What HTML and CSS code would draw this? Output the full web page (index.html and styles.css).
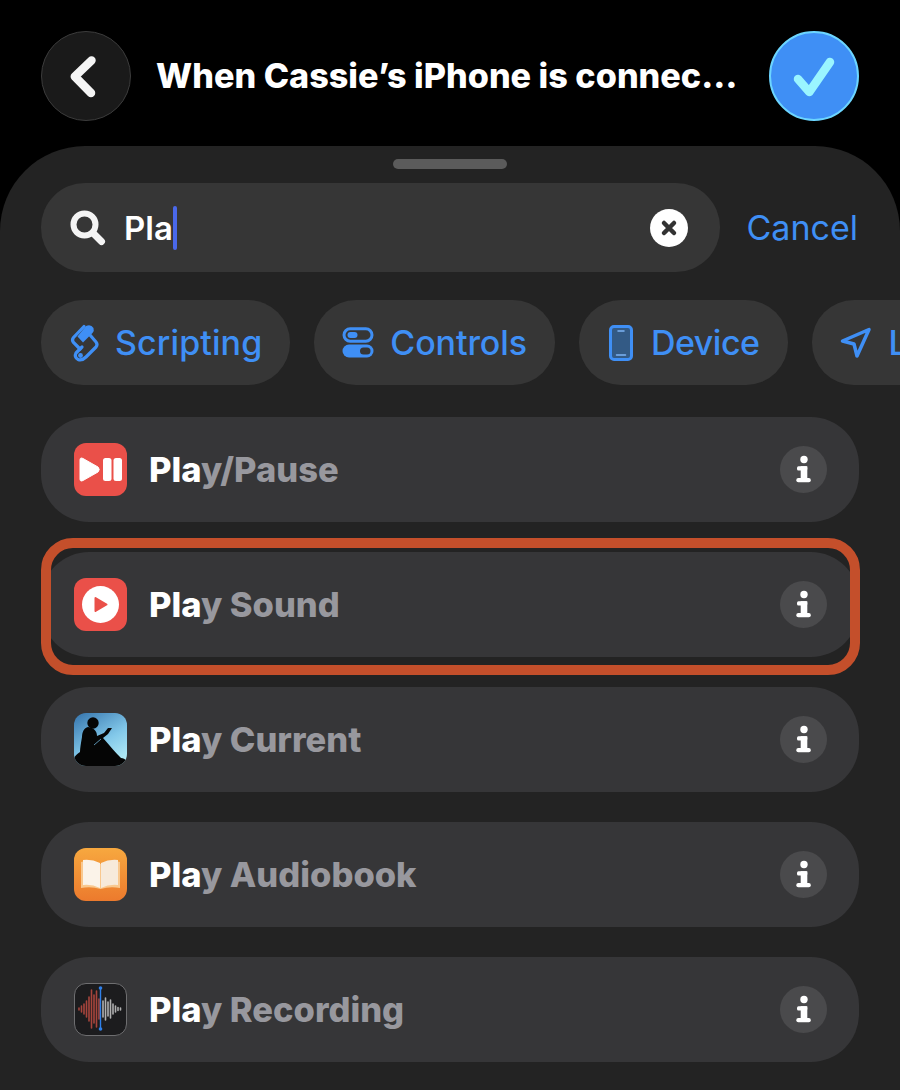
FILE: index.html
```html
<!DOCTYPE html>
<html lang="en">
<head>
<meta charset="utf-8">
<title>Add action</title>
<link rel="stylesheet" href="styles.css">
</head>
<body>
<div class="page">
  <header class="top">
    <button class="circle back" aria-label="Back">
      <svg width="32" height="44" viewBox="0 0 32 44"><path d="M21.500 6.500 L4.800 22.500 L21 39" fill="none" stroke="#f4f4f4" stroke-width="8.500" stroke-linecap="round" stroke-linejoin="round"/></svg>
    </button>
    <h1 class="title">When Cassie’s iPhone is connec…</h1>
    <button class="circle done" aria-label="Done">
      <svg width="44" height="44" viewBox="0 0 44 44"><path d="M6 25 L17.300 38 L38 8" fill="none" stroke="#9af5ff" stroke-width="8.500" stroke-linecap="round" stroke-linejoin="round"/></svg>
    </button>
  </header>
  <main class="sheet">
    <div class="handle"></div>
    <div class="search-row">
      <div class="search">
        <svg class="mag" width="36" height="36" viewBox="0 0 36 36"><circle cx="14.500" cy="14.500" r="11" fill="none" stroke="#f4f4f4" stroke-width="6"/><path d="M23 23 L31.500 31.500" stroke="#f4f4f4" stroke-width="7" stroke-linecap="round"/></svg>
        <span class="query">Pla</span><span class="caret"></span>
        <span class="clear">
          <svg width="18" height="18" viewBox="0 0 18 18"><path d="M4 4 L14 14 M14 4 L4 14" stroke="#333" stroke-width="4.500" stroke-linecap="round"/></svg>
        </span>
      </div>
      <span class="cancel">Cancel</span>
    </div>
    <div class="chips">
      <div class="chip">
        <svg width="32" height="40" viewBox="0 0 32 40">
          <path d="M15 3.500 L4.500 14.500 Q2.500 17 4.500 19.500 L11 26" fill="none" stroke="#3f8ff5" stroke-width="3.200" stroke-linecap="round"/>
          <path d="M17 3 Q22 1 24.500 5 Q25.500 8 23.500 10 L14 19.500 L8.500 13.500 Z" fill="#3f8ff5"/>
          <path d="M21 12 L27 19 Q29 21.500 27 24 L17 34 Q13 38 9 36.500 Q5 34 7 30 L13 24" fill="none" stroke="#3f8ff5" stroke-width="3.200" stroke-linejoin="round" stroke-linecap="round"/>
          <circle cx="11.500" cy="32.500" r="2.400" fill="#3f8ff5"/>
        </svg>
        <span class="wide">Scripting</span>
      </div>
      <div class="chip">
        <svg width="34" height="32" viewBox="0 0 34 32">
          <rect x="2" y="1.800" width="28" height="12.400" rx="6.200" fill="none" stroke="#3f8ff5" stroke-width="3"/>
          <rect x="5.500" y="5" width="10" height="6" rx="3" fill="#3f8ff5"/>
          <rect x="0.500" y="17.500" width="31" height="13" rx="6.500" fill="#3f8ff5"/>
          <rect x="18" y="20.500" width="10.500" height="7" rx="3.500" fill="#363636"/>
        </svg>
        <span class="snug">Controls</span>
      </div>
      <div class="chip">
        <svg width="30" height="36" viewBox="0 0 30 36"><rect x="3.500" y="1.500" width="21" height="33" rx="3.500" fill="#335a85" stroke="#3f8ff5" stroke-width="3"/><path d="M11 6 H17 M9.500 30 H18.500" stroke="#7db4f5" stroke-width="1.500" stroke-linecap="round"/></svg>
        <span class="tight">Device</span>
      </div>
      <div class="chip">
        <svg width="35" height="32" viewBox="0 0 35 32"><path d="M2.500 14 L29 2.500 L17 29 L14 17 Z" fill="none" stroke="#3f8ff5" stroke-width="3.500" stroke-linejoin="round"/></svg>
        <span>Location</span>
      </div>
    </div>
    <ul class="list">
      <li class="row">
        <span class="app red">
          <svg width="53" height="53" viewBox="0 0 53 53"><path d="M6 17 Q6 14 9 15.500 L24 24 Q26.500 26.500 24 29 L9 37.500 Q6 39 6 36 Z" fill="#fff" stroke="#fff" stroke-width="1"/><rect x="29" y="15" width="8.500" height="23" rx="2.500" fill="#fff"/><rect x="39.500" y="15" width="8.500" height="23" rx="2.500" fill="#fff"/></svg>
        </span>
        <span class="label"><b>Pla</b>y/Pause</span>
        <span class="info"><svg width="22" height="30" viewBox="0 0 22 30"><circle cx="11" cy="4.500" r="3.700"/><rect x="4" y="11.200" width="10.300" height="4.300" rx="1.500"/><rect x="7.700" y="11.200" width="6.600" height="14"/><rect x="3.300" y="23" width="14.500" height="4.300" rx="2"/></svg></span>
      </li>
      <li class="row">
        <span class="app red">
          <svg width="53" height="53" viewBox="0 0 53 53"><circle cx="26.500" cy="26.500" r="18.500" fill="#fff"/><path d="M21.500 20 L32.500 26.500 L21.500 33 Z" fill="#ea5049" stroke="#ea5049" stroke-width="2" stroke-linejoin="round"/></svg>
        </span>
        <span class="label"><b>Pla</b>y Sound</span>
        <span class="info"><svg width="22" height="30" viewBox="0 0 22 30"><circle cx="11" cy="4.500" r="3.700"/><rect x="4" y="11.200" width="10.300" height="4.300" rx="1.500"/><rect x="7.700" y="11.200" width="6.600" height="14"/><rect x="3.300" y="23" width="14.500" height="4.300" rx="2"/></svg></span>
        <span class="highlight"></span>
      </li>
      <li class="row">
        <span class="app">
          <svg width="53" height="53" viewBox="0 0 53 53">
            <defs><linearGradient id="sky" x1="0.200" y1="0" x2="0.800" y2="1"><stop offset="0" stop-color="#3f7fb5"/><stop offset="0.550" stop-color="#82c8e9"/><stop offset="1" stop-color="#b5edf7"/></linearGradient></defs>
            <rect width="53" height="53" fill="url(#sky)"/>
            <circle cx="19" cy="10" r="5.700" fill="#050505"/>
            <path d="M14 14 C10 15 8 19 8 24 C7 30 6 35 6 39 C3 41 1 43 0 45 V53 H53 V48 C51 46 49 45 47 45 C42 40 36 33 29 25 L34 21 L38 15 L34 15 L30 20 L23 23 C23 19 21 15 14 14 Z" fill="#050505"/>
            <path d="M20 32 L27 26" stroke="#6fb4d8" stroke-width="0.800" fill="none"/>
          </svg>
        </span>
        <span class="label"><b>Pla</b>y Current</span>
        <span class="info"><svg width="22" height="30" viewBox="0 0 22 30"><circle cx="11" cy="4.500" r="3.700"/><rect x="4" y="11.200" width="10.300" height="4.300" rx="1.500"/><rect x="7.700" y="11.200" width="6.600" height="14"/><rect x="3.300" y="23" width="14.500" height="4.300" rx="2"/></svg></span>
      </li>
      <li class="row">
        <span class="app orange">
          <svg width="53" height="53" viewBox="0 0 53 53">
            <path d="M7 14 Q16 11 26.500 16 Q37 11 46 14 V40 Q36 38 26.500 41 Q17 38 7 40 Z" fill="#f9c88f"/>
            <path d="M9 12 Q18 11 26 15 V40 Q18 36 9 37 Z" fill="#fbf3e9"/>
            <path d="M44 12 Q35 11 27 15 V40 Q35 36 44 37 Z" fill="#f7eadb"/>
          </svg>
        </span>
        <span class="label"><b>Pla</b>y Audiobook</span>
        <span class="info"><svg width="22" height="30" viewBox="0 0 22 30"><circle cx="11" cy="4.500" r="3.700"/><rect x="4" y="11.200" width="10.300" height="4.300" rx="1.500"/><rect x="7.700" y="11.200" width="6.600" height="14"/><rect x="3.300" y="23" width="14.500" height="4.300" rx="2"/></svg></span>
      </li>
      <li class="row">
        <span class="app memo">
          <svg width="50" height="50" viewBox="0 0 50 50">
            <path d="M4 24 V26 M6.500 22 V28 M9 20 V30 M11.500 17 V33 M14 13 V37 M16.500 6 V44 M19 11 V39 M21.500 7 V43 M24 15 V35" stroke="#a8453c" stroke-width="1.600" stroke-linecap="round"/>
            <path d="M28 17 V33 M30.500 14 V36 M33 18 V32 M35.500 16 V34 M38 20 V30 M40.500 22 V28 M43 23.500 V26.500 M45.500 24 V26" stroke="#b0b0b0" stroke-width="1.600" stroke-linecap="round"/>
            <path d="M25.500 4 V45" stroke="#2f80ea" stroke-width="1.400"/>
            <circle cx="25.500" cy="4" r="1.800" fill="#2f80ea"/><circle cx="25.500" cy="45" r="1.800" fill="#2f80ea"/>
          </svg>
        </span>
        <span class="label"><b>Pla</b>y Recording</span>
        <span class="info"><svg width="22" height="30" viewBox="0 0 22 30"><circle cx="11" cy="4.500" r="3.700"/><rect x="4" y="11.200" width="10.300" height="4.300" rx="1.500"/><rect x="7.700" y="11.200" width="6.600" height="14"/><rect x="3.300" y="23" width="14.500" height="4.300" rx="2"/></svg></span>
      </li>
    </ul>
  </main>
</div>
</body>
</html>
```
FILE: styles.css
```css
* { box-sizing: border-box; margin: 0; padding: 0; }
html, body { height: 100%; background: #000; overflow: hidden; }
body { font-family: Inter, "Liberation Sans", sans-serif; color: #fff; }
.page { height: 1090px; display: flex; flex-direction: column; }
.top { display: flex; align-items: center; padding: 31px 41px 25px; }
.circle { width: 90px; height: 90px; border-radius: 50%; display: flex; align-items: center; justify-content: center; flex: none; }
.back { background: #1a1a1a; border: 1.5px solid #3c3c3c; }
.done { background: #3f8ff5; border: 2px solid #6cd5ff; }
.title { flex: 1; font-size: 34.2px; font-weight: 800; margin-left: 25px; white-space: nowrap; overflow: hidden; line-height: 40px; }
.sheet { flex: 1; background: #232323; border-radius: 85px 85px 0 0; padding: 13px 0 0; display: flex; flex-direction: column; overflow: hidden; }
.handle { width: 114px; height: 10px; border-radius: 5px; background: #5b5b5b; margin: 0 auto 14px; flex: none; }
.search-row { display: flex; align-items: center; justify-content: space-between; padding: 0 42px 0 41px; flex: none; }
.search { width: 679px; height: 89px; background: #363636; border-radius: 44px; display: flex; align-items: center; padding: 0 32px 0 29px; }
.mag { flex: none; margin-right: 18px; }
.query { font-size: 33px; font-weight: 600; }
.caret { width: 4px; height: 44px; background: #4a68ea; border-radius: 2px; flex: none; }
.clear { width: 38px; height: 38px; border-radius: 50%; background: #fff; margin-left: auto; display: flex; align-items: center; justify-content: center; }
.cancel { font-size: 34px; color: #3f8ff5; font-weight: 400; }
.chips { display: flex; gap: 24px; padding-left: 41px; margin-top: 28px; flex: none; }
.chip { height: 85px; border-radius: 42px; background: #363636; color: #3f8ff5; display: flex; align-items: center; gap: 14px; padding: 0 28px; flex: none; font-size: 34px; font-weight: 500; }
.wide { letter-spacing: 0.1px; }
.snug { letter-spacing: -0.1px; }
.tight { letter-spacing: -0.5px; }
.list { list-style: none; display: flex; flex-direction: column; gap: 30px; padding: 0 41px; margin-top: 32px; }
.row { position: relative; height: 105px; border-radius: 48px; background: #363638; display: flex; align-items: center; padding: 0 32px 0 33px; }
.app { width: 53px; height: 53px; border-radius: 12px; overflow: hidden; flex: none; display: block; }
.app svg { display: block; }
.red { background: #ea5049; }
.orange { background: linear-gradient(#f7a83f, #ec7a2d); }
.memo { background: #1c1c1e; border: 1.5px solid #6e6e70; }
.label { margin-left: 22px; font-size: 34.5px; font-weight: 800; color: #98989e; }
.label b { color: #fff; font-weight: 800; }
.info { margin-left: auto; width: 47px; height: 47px; border-radius: 50%; background: #4a4a4c; display: flex; align-items: center; justify-content: center; }
.info svg { fill: #fff; }
.highlight { position: absolute; left: 0; right: -1px; top: -14px; bottom: -18px; border: 10px solid #c44f2b; border-radius: 32px; }
```
